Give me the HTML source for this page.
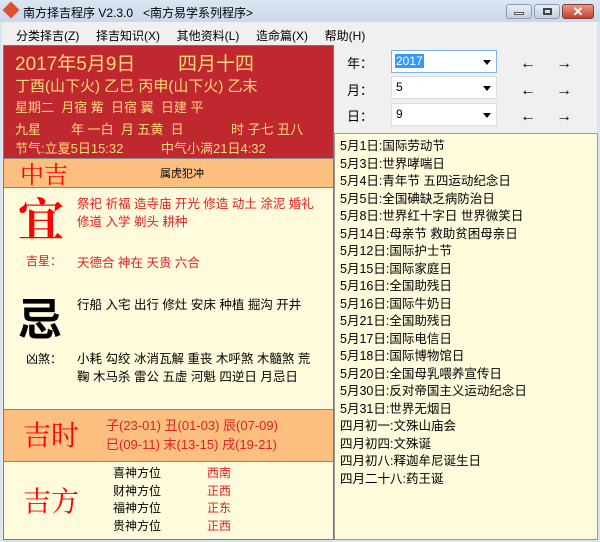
<!DOCTYPE html>
<html><head><meta charset="utf-8"><style>
*{margin:0;padding:0;box-sizing:border-box}
body{width:600px;height:542px;overflow:hidden;background:#d9e4f1;font-family:"Liberation Sans","Noto Sans CJK SC",sans-serif;font-size:12px;position:relative}
.a{position:absolute;white-space:nowrap}
.r{color:#ff0000}
.y{color:#ffd97a}
.big{line-height:1;font-family:'Noto Serif CJK SC',serif}
</style></head><body>
<div class="a" style="left:0;top:0;width:600px;height:22px;background:linear-gradient(#dbe6f3,#c9d8ea)"></div>
<div class="a" style="left:5px;top:4px;width:12px;height:12px;background:#e0502a;transform:rotate(45deg)"></div>
<div class="a" style="left:23px;top:4px;font-size:12px;color:#000">南方择吉程序 V2.3.0 &nbsp;&nbsp;&lt;南方易学系列程序&gt;</div>
<div class="a" style="left:506px;top:4px;width:26px;height:15px;border:1px solid #8a9bb2;border-radius:3px;background:linear-gradient(#e8eef6,#c2d0e2)"></div>
<div class="a" style="left:514px;top:12px;width:10px;height:3px;background:#fff;border:1px solid #555"></div>
<div class="a" style="left:534px;top:4px;width:26px;height:15px;border:1px solid #8a9bb2;border-radius:3px;background:linear-gradient(#e8eef6,#c2d0e2)"></div>
<div class="a" style="left:543px;top:8px;width:9px;height:7px;border:2px solid #444"></div>
<div class="a" style="left:562px;top:4px;width:32px;height:15px;border:1px solid #8a3b30;border-radius:3px;background:linear-gradient(#e99a86,#c4412c);color:#fff;font-weight:bold;text-align:center;line-height:13px;font-size:13px">✕</div>
<div class="a" style="left:2px;top:22px;width:595px;height:518px;background:#f0f0f0"></div>
<div class="a" style="left:16px;top:27px;color:#000">分类择吉(Z)&nbsp;&nbsp;&nbsp;&nbsp;&nbsp;择吉知识(X)&nbsp;&nbsp;&nbsp;&nbsp;&nbsp;其他资料(L)&nbsp;&nbsp;&nbsp;&nbsp;&nbsp;造命篇(X)&nbsp;&nbsp;&nbsp;&nbsp;&nbsp;帮助(H)</div>
<div class="a" style="left:3px;top:45px;width:331px;height:495px;border:1px solid #777;background:#fffbdc"></div>
<div class="a" style="left:4px;top:46px;width:329px;height:112px;background:#c0282f"></div>
<div class="a y" style="left:15px;top:49px;font-size:19px">2017年5月9日</div>
<div class="a y" style="left:178px;top:49px;font-size:19px">四月十四</div>
<div class="a y" style="left:15px;top:75px;font-size:15px">丁酉(山下火) 乙巳 丙申(山下火) 乙末</div>
<div class="a y" style="left:15px;top:97px;font-size:13px">星期二 &nbsp;月宿 觜 &nbsp;日宿 翼 &nbsp;日建 平</div>
<div class="a y" style="left:15px;top:119px;font-size:13px">九星</div>
<div class="a y" style="left:71px;top:119px;font-size:13px">年 一白 &nbsp;月 五黄 &nbsp;日</div>
<div class="a y" style="left:231px;top:119px;font-size:13px">时 子七 丑八</div>
<div class="a y" style="left:15px;top:138px;font-size:13px">节气:立夏5日15:32</div>
<div class="a y" style="left:161px;top:138px;font-size:13px">中气小满21日4:32</div>
<div class="a" style="left:4px;top:158px;width:329px;height:30px;background:#fdbf7f;border-top:1px solid #888;border-bottom:1px solid #888"></div>
<div class="a r big" style="left:20px;top:161px;font-size:24px">中吉</div>
<div class="a" style="left:160px;top:165px;font-size:11px">属虎犯冲</div>
<div class="a r big" style="left:18px;top:194px;font-size:46px;font-weight:bold">宜</div>
<div class="a" style="left:77px;top:195px;font-size:12.5px;color:#e02020;line-height:18px">祭祀 祈福 造寺庙 开光 修造 动土 涂泥 婚礼<br>修道 入学 剃头 耕种</div>
<div class="a" style="left:26px;top:252px;color:#e02020">吉星：</div>
<div class="a" style="left:77px;top:252px;color:#e02020;font-size:12.5px">天德合 神在 天贵 六合</div>
<div class="a" style="left:18px;top:294px;font-size:44px;font-weight:bold;line-height:1;font-family:'Noto Sans CJK SC',sans-serif">忌</div>
<div class="a" style="left:77px;top:294px;font-size:12.5px">行船 入宅 出行 修灶 安床 种植 掘沟 开井</div>
<div class="a" style="left:26px;top:350px">凶煞：</div>
<div class="a" style="left:77px;top:350px;font-size:12.5px;line-height:18px">小耗 勾绞 冰消瓦解 重丧 木呼煞 木髓煞 荒<br>鞠 木马杀 雷公 五虚 河魁 四逆日 月忌日</div>
<div class="a" style="left:4px;top:409px;width:329px;height:53px;background:#fdbf7f;border-top:1px solid #888;border-bottom:1px solid #888"></div>
<div class="a r big" style="left:23px;top:420px;font-size:28px">吉时</div>
<div class="a" style="left:106px;top:416px;color:#e02020;font-size:13px;line-height:19px">子(23-01) 丑(01-03) 辰(07-09)<br>巳(09-11) 末(13-15) 戌(19-21)</div>
<div class="a r big" style="left:23px;top:486px;font-size:28px">吉方</div>
<div class="a" style="left:113px;top:465px;line-height:17.5px">喜神方位<br>财神方位<br>福神方位<br>贵神方位</div>
<div class="a" style="left:207px;top:465px;line-height:17.5px;color:#e02020">西南<br>正西<br>正东<br>正西</div>
<div class="a" style="left:347px;top:53px;font-size:13px">年：</div>
<div class="a" style="left:347px;top:80px;font-size:13px">月：</div>
<div class="a" style="left:347px;top:106px;font-size:13px">日：</div>
<div class="a" style="left:391px;top:50px;width:106px;height:23px;background:#fff;border:1px solid #7eb4ea"><span style="position:absolute;left:3px;top:3px;background:#3399ff;color:#fff;padding:0 1px">2017</span><span style="position:absolute;right:5px;top:9px;border:4px solid transparent;border-top:5px solid #000"></span></div>
<div class="a" style="left:391px;top:76px;width:106px;height:23px;background:#fff;border:1px solid #ddd"><span style="position:absolute;left:4px;top:3px">5</span><span style="position:absolute;right:5px;top:9px;border:4px solid transparent;border-top:5px solid #000"></span></div>
<div class="a" style="left:391px;top:103px;width:106px;height:23px;background:#fff;border:1px solid #ddd"><span style="position:absolute;left:4px;top:3px">9</span><span style="position:absolute;right:5px;top:9px;border:4px solid transparent;border-top:5px solid #000"></span></div>
<div class="a" style="left:520px;top:51px;font-size:16px;line-height:26.5px">←<br>←<br>←</div>
<div class="a" style="left:556px;top:51px;font-size:16px;line-height:26.5px">→<br>→<br>→</div>
<div class="a" style="left:334px;top:133px;width:264px;height:407px;background:#fffbdc;border:1px solid #999"></div>
<div class="a" style="left:340px;top:138px;font-size:12.5px;line-height:17.5px">5月1日:国际劳动节<br>5月3日:世界哮喘日<br>5月4日:青年节 五四运动纪念日<br>5月5日:全国碘缺乏病防治日<br>5月8日:世界红十字日 世界微笑日<br>5月14日:母亲节 救助贫困母亲日<br>5月12日:国际护士节<br>5月15日:国际家庭日<br>5月16日:全国助残日<br>5月16日:国际牛奶日<br>5月21日:全国助残日<br>5月17日:国际电信日<br>5月18日:国际博物馆日<br>5月20日:全国母乳喂养宣传日<br>5月30日:反对帝国主义运动纪念日<br>5月31日:世界无烟日<br>四月初一:文殊山庙会<br>四月初四:文殊诞<br>四月初八:释迦牟尼诞生日<br>四月二十八:药王诞</div>
</body></html>
